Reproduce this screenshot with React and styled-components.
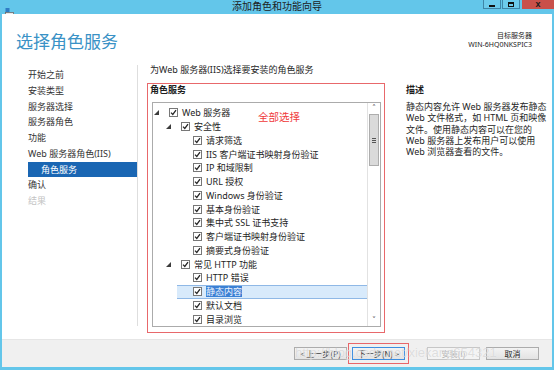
import React from 'react';
import styled, { createGlobalStyle } from 'styled-components';

const GlobalStyle = createGlobalStyle`
    body {
        margin: 0;
        font-family: "Noto Sans", "Noto Sans CJK SC", sans-serif;
        color: #1e1e1e;
    }
`;

const navItems = [
    { label: '开始之前' },
    { label: '安装类型' },
    { label: '服务器选择' },
    { label: '服务器角色' },
    { label: '功能' },
    { label: 'Web 服务器角色(IIS)' },
    { label: '角色服务', active: true },
    { label: '确认' },
    { label: '结果', disabled: true },
];

const treeRows = [
    { level: 0, expanded: true, label: 'Web 服务器' },
    { level: 1, expanded: true, label: '安全性' },
    { level: 2, label: '请求筛选' },
    { level: 2, label: 'IIS 客户端证书映射身份验证' },
    { level: 2, label: 'IP 和域限制' },
    { level: 2, label: 'URL 授权' },
    { level: 2, label: 'Windows 身份验证' },
    { level: 2, label: '基本身份验证' },
    { level: 2, label: '集中式 SSL 证书支持' },
    { level: 2, label: '客户端证书映射身份验证' },
    { level: 2, label: '摘要式身份验证' },
    { level: 1, expanded: true, label: '常见 HTTP 功能' },
    { level: 2, label: 'HTTP 错误' },
    { level: 2, label: '静态内容', selected: true },
    { level: 2, label: '默认文档' },
    { level: 2, label: '目录浏览' },
];

const Expander = () => (
    <svg width="5" height="5" viewBox="0 0 5 5">
        <polygon points="5,0 5,5 0,5" fill="#3c3c3c" />
    </svg>
);

const Check = () => (
    <svg width="7" height="7" viewBox="0 0 7 7">
        <polyline points="1,3.6 2.8,5.4 6,1.2" fill="none" stroke="#262626" strokeWidth="1.3" />
    </svg>
);

const AppIcon = () => (
    <svg width="9" height="9" viewBox="0 0 9 9">
        <rect x="0.5" y="0" width="4" height="4" fill="#2f7cc4" />
        <rect x="0.5" y="4.5" width="8" height="4" fill="#e8e8e8" stroke="#6b6b6b" strokeWidth="0.8" />
        <line x1="2" y1="6.5" x2="7" y2="6.5" stroke="#6b6b6b" strokeWidth="0.8" />
    </svg>
);

function App() {
    return (
        <Window>
            <GlobalStyle />
            <TitleBar>
                <IconSlot><AppIcon /></IconSlot>
                <Title>添加角色和功能向导</Title>
                <Controls>
                    <CaptionBtn><MinGlyph /></CaptionBtn>
                    <CaptionBtn><MaxGlyph /></CaptionBtn>
                    <CloseBtn>x</CloseBtn>
                </Controls>
            </TitleBar>

            <Body>
                <Header>
                    <PageTitle>选择角色服务</PageTitle>
                    <ServerInfo>
                        <div>目标服务器</div>
                        <div>WIN-6HQ0NKSPIC3</div>
                    </ServerInfo>
                </Header>

                <Content>
                    <Nav>
                        {navItems.map((item) => (
                            <NavItem key={item.label} $active={item.active} $disabled={item.disabled}>
                                {item.label}
                            </NavItem>
                        ))}
                    </Nav>

                    <Main>
                        <Subtitle>为Web 服务器(IIS)选择要安装的角色服务</Subtitle>
                        <RedBox>
                            <BoxLabel>角色服务</BoxLabel>
                            <Note>全部选择</Note>
                            <Tree>
                                <Rows>
                                    {treeRows.map((row, i) => (
                                        <Row key={i} $level={row.level} $selected={row.selected}>
                                            <ExpCell>{row.expanded && <Expander />}</ExpCell>
                                            <CheckBox><Check /></CheckBox>
                                            <RowText $selected={row.selected}>{row.label}</RowText>
                                        </Row>
                                    ))}
                                </Rows>
                                <ScrollBar>
                                    <ArrowBtn>˄</ArrowBtn>
                                    <Thumb>
                                        <Grip />
                                    </Thumb>
                                    <Track />
                                    <ArrowBtn>˅</ArrowBtn>
                                </ScrollBar>
                            </Tree>
                        </RedBox>
                    </Main>

                    <Desc>
                        <DescTitle>描述</DescTitle>
                        <DescText>
                            静态内容允许 Web 服务器发布静态<br />
                            Web 文件格式，如 HTML 页和映像<br />
                            文件。使用静态内容可以在您的<br />
                            Web 服务器上发布用户可以使用<br />
                            Web 浏览器查看的文件。
                        </DescText>
                    </Desc>
                </Content>
            </Body>

            <Footer>
                <Button>&lt; 上一步(P)</Button>
                <Button $primary>下一步(N) &gt;</Button>
                <Button $disabled $gap={22}>安装(I)</Button>
                <Button $gap={6}>取消</Button>
                <Watermark>http://blog.csdn.net/xiekang654321</Watermark>
            </Footer>
        </Window>
    );
}

export default App;

const Window = styled.div`
    width: 554px;
    height: 370px;
    box-sizing: border-box;
    background: #63c6ea;
    padding: 0 2px 3px;
    display: flex;
    flex-direction: column;
    overflow: hidden;
`;

const TitleBar = styled.div`
    height: 14px;
    margin: 0 -2px;
    display: grid;
    grid-template-columns: 1fr auto 1fr;
    align-items: start;
`;

const IconSlot = styled.div`
    padding-left: 5px;
    height: 9px;
`;

const Title = styled.div`
    font-family: "Noto Sans CJK SC", sans-serif;
    font-size: 10px;
    line-height: 11px;
    color: #1c1c1c;
`;

const Controls = styled.div`
    justify-self: end;
    display: flex;
    gap: 1px;
`;

const CaptionBtn = styled.div`
    width: 18px;
    height: 9px;
    box-sizing: border-box;
    border: 1px solid #3f86a8;
    border-top: none;
    background: #6ccbec;
    display: flex;
    align-items: flex-end;
    justify-content: center;
    padding-bottom: 1px;
`;

const MinGlyph = styled.span`
    width: 6px;
    height: 2px;
    background: #111;
`;

const MaxGlyph = styled.span`
    width: 6px;
    height: 5px;
    box-sizing: border-box;
    border: 1px solid #111;
    border-top-width: 2px;
`;

const CloseBtn = styled.div`
    width: 32px;
    height: 9px;
    margin-left: 1px;
    background: #c9504a;
    color: #1a1a1a;
    font-family: "Liberation Sans", sans-serif;
    font-weight: bold;
    font-size: 9px;
    line-height: 8px;
    text-align: center;
`;

const Body = styled.div`
    flex: 1;
    background: #ffffff;
    display: flex;
    flex-direction: column;
    min-height: 0;
`;

const Header = styled.div`
    height: 50px;
    box-sizing: border-box;
    padding: 17px 20px 0 14px;
    display: flex;
    justify-content: space-between;
    align-items: flex-start;
`;

const PageTitle = styled.div`
    font-family: "Noto Sans CJK SC", sans-serif;
    font-size: 17px;
    line-height: 20px;
    color: #3a92c6;
`;

const ServerInfo = styled.div`
    text-align: right;
    font-size: 7px;
    line-height: 9px;
    color: #222;
`;

const Content = styled.div`
    flex: 1;
    display: flex;
    min-height: 0;
`;

const Nav = styled.div`
    width: 135px;
    border-right: 1px solid #dedede;
    margin: 1px 0 13px;
    padding-top: 2px;
`;

const NavItem = styled.div`
    margin-left: 26px;
    height: 15.75px;
    line-height: 15.75px;
    font-size: 9px;
    padding-left: ${(p) => (p.$active ? '13px' : '0')};
    background: ${(p) => (p.$active ? '#1a66b3' : 'transparent')};
    color: ${(p) => (p.$active ? '#ffffff' : p.$disabled ? '#c4c4c4' : '#333333')};
    white-space: nowrap;
`;

const Main = styled.div`
    width: 247px;
    padding-left: 9px;
    display: flex;
    flex-direction: column;
`;

const Subtitle = styled.div`
    padding-left: 3px;
    height: 12px;
    line-height: 12px;
    font-size: 9px;
    color: #262626;
    white-space: nowrap;
`;

const RedBox = styled.div`
    position: relative;
    margin-top: 7px;
    width: 238px;
    height: 250px;
    box-sizing: border-box;
    border: 1px solid #e8686b;
`;

const BoxLabel = styled.div`
    padding-left: 2px;
    height: 12px;
    line-height: 12px;
    font-size: 9px;
    font-weight: bold;
    color: #1e1e1e;
`;

const Note = styled.div`
    position: absolute;
    left: 110px;
    top: 26px;
    font-family: "Noto Sans CJK SC", sans-serif;
    font-size: 10.5px;
    line-height: 14px;
    color: #f03a3a;
`;

const Tree = styled.div`
    margin: 6px 0 0 4px;
    width: 229px;
    height: 225px;
    box-sizing: border-box;
    border: 1px solid #ababab;
    display: flex;
    overflow: hidden;
`;

const Rows = styled.div`
    flex: 1;
    padding-top: 3px;
    overflow: hidden;
`;

const Row = styled.div`
    margin-left: ${(p) => p.$level * 12}px;
    height: 13.75px;
    box-sizing: border-box;
    display: flex;
    align-items: center;
    background: ${(p) => (p.$selected ? '#d8eafb' : 'transparent')};
    border-top: 1px solid ${(p) => (p.$selected ? '#8fb8e6' : 'transparent')};
    border-bottom: 1px solid ${(p) => (p.$selected ? '#8fb8e6' : 'transparent')};
`;

const ExpCell = styled.div`
    width: 16px;
    height: 100%;
    display: flex;
    align-items: center;
    padding-left: 1px;
    box-sizing: border-box;
`;

const CheckBox = styled.div`
    width: 9px;
    height: 9px;
    box-sizing: border-box;
    border: 1px solid #777;
    background: #fff;
    display: flex;
    align-items: center;
    justify-content: center;
    flex-shrink: 0;
`;

const RowText = styled.span`
    margin-left: 4px;
    font-size: 9px;
    line-height: 11px;
    white-space: nowrap;
    color: ${(p) => (p.$selected ? '#eef4ff' : '#1e1e1e')};
    background: ${(p) => (p.$selected ? '#3b80d4' : 'transparent')};
`;

const ScrollBar = styled.div`
    width: 12px;
    border-left: 1px solid #e2e2e2;
    display: flex;
    flex-direction: column;
    background: #fff;
`;

const ArrowBtn = styled.div`
    height: 11px;
    text-align: center;
    font-family: "DejaVu Sans", sans-serif;
    font-size: 8px;
    line-height: 11px;
    color: #606060;
`;

const Thumb = styled.div`
    height: 52px;
    margin: 0 1px;
    box-sizing: border-box;
    border: 1px solid #adadad;
    background: #dadada;
    display: flex;
    align-items: center;
    justify-content: center;
`;

const Grip = styled.span`
    width: 4px;
    height: 5px;
    border-top: 1px solid #555;
    border-bottom: 1px solid #555;
    box-sizing: border-box;
    background: linear-gradient(#555, #555) center / 100% 1px no-repeat;
`;

const Track = styled.div`
    flex: 1;
`;

const Desc = styled.div`
    flex: 1;
    padding: 20px 0 0 12px;
`;

const DescTitle = styled.div`
    height: 12px;
    line-height: 12px;
    font-size: 9px;
    font-weight: bold;
    color: #1e1e1e;
`;

const DescText = styled.div`
    margin-top: 5px;
    font-size: 9px;
    line-height: 11.3px;
    color: #262626;
    white-space: nowrap;
`;

const Footer = styled.div`
    position: relative;
    height: 28px;
    box-sizing: border-box;
    background: #f0f0f0;
    border-top: 1px solid #e6e6e6;
    display: flex;
    justify-content: flex-end;
    align-items: flex-start;
    padding: 7px 13px 0 0;
`;

const Button = styled.div`
    width: 53px;
    height: 13px;
    margin-left: ${(p) => (p.$gap ? p.$gap : 5)}px;
    box-sizing: border-box;
    border: 1px solid ${(p) => (p.$primary ? '#3d8ee0' : p.$disabled ? '#c6c6c6' : '#acacac')};
    background: ${(p) => (p.$disabled ? '#f4f4f4' : 'linear-gradient(#f3f3f3, #e3e3e3)')};
    color: ${(p) => (p.$disabled ? '#a5a5a5' : '#1e1e1e')};
    font-family: "Noto Sans CJK SC", sans-serif;
    font-size: 8px;
    line-height: 11px;
    text-align: center;
    white-space: nowrap;
    outline: ${(p) => (p.$primary ? '1px solid #e8666a' : 'none')};
    outline-offset: 3px;
`;

const Watermark = styled.div`
    position: absolute;
    left: 293px;
    top: 5px;
    font-family: "Liberation Sans", sans-serif;
    font-size: 13px;
    line-height: 15px;
    color: rgba(185, 185, 185, 0.45);
    text-shadow: 0 0 1px rgba(255, 255, 255, 0.8);
    white-space: nowrap;
    pointer-events: none;
`;
